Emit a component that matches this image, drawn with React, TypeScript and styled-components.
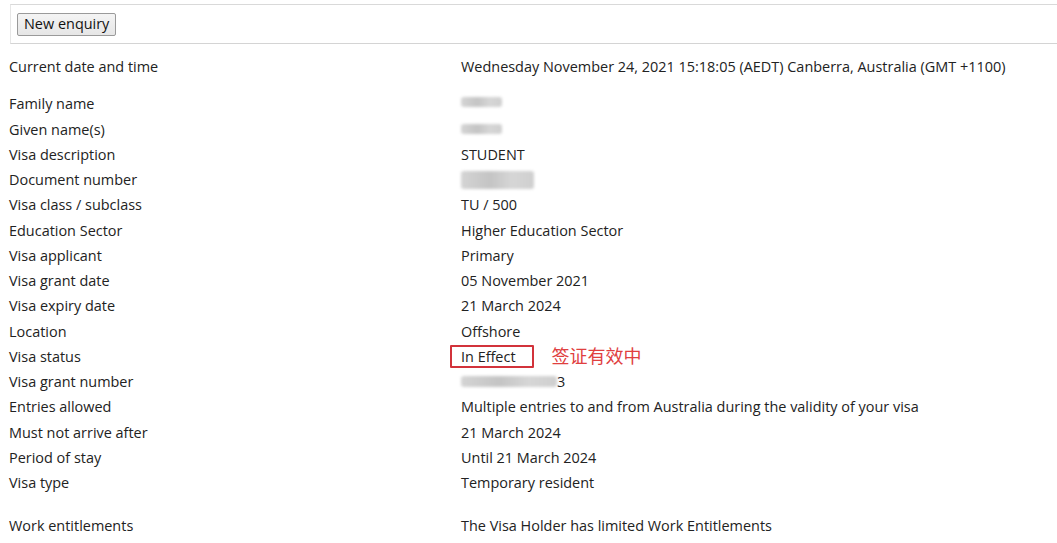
import React from 'react'
import styled, { createGlobalStyle } from 'styled-components'

const GlobalStyle = createGlobalStyle`
  html, body {
    margin: 0;
    padding: 0;
    background: #ffffff;
  }
  body {
    font-family: 'Open Sans', 'Noto Sans', 'Noto Sans CJK SC', sans-serif;
    font-size: 14.45px;
    color: #222222;
  }
`

const Page = styled.div`
  width: 1057px;
  height: 543px;
  overflow: hidden;
  padding-top: 4px;
  box-sizing: border-box;
`

const Toolbar = styled.div`
  margin-left: 10px;
  height: 38px;
  border-top: 1px solid #d9d9d9;
  border-left: 1px solid #e6e6e6;
  border-bottom: 1px solid #d4d4d4;
  display: flex;
  align-items: center;
  padding-left: 6px;
`

const Button = styled.button`
  font-family: inherit;
  font-size: 14.45px;
  color: #111;
  height: 23px;
  padding: 0 6px;
  background: linear-gradient(#f4f4f4, #e6e6e6);
  border: 1px solid #9a9a9a;
  border-radius: 2px;
  line-height: 20px;
`

const Section = styled.div<{ $top: number }>`
  display: grid;
  grid-template-columns: 452px 1fr;
  padding-left: 9px;
  margin-top: ${p => p.$top}px;
  line-height: 25.27px;
`

const Label = styled.div`
  white-space: nowrap;
`

const Value = styled.div`
  white-space: nowrap;
  display: flex;
  align-items: center;
`

const Blur = styled.span<{ $w: number; $h: number; $dy?: number }>`
  display: inline-block;
  width: ${p => p.$w}px;
  height: ${p => p.$h}px;
  margin-top: ${p => (p.$dy ?? 0) * 2}px;
  background: linear-gradient(90deg, #d4d4d4, #c4c4c4 40%, #d6d6d6 70%, #cfcfcf);
  border-radius: 3px;
  filter: blur(1.5px);
`

const StatusBox = styled.span`
  display: inline-block;
  margin-left: -11px;
  padding: 0 16px 0 9px;
  height: 19px;
  line-height: 19px;
  border: 2px solid #d2333b;
  border-radius: 1px;
`

const Note = styled.span`
  margin-left: 18px;
  color: #e0403f;
  font-family: 'Noto Sans CJK SC', sans-serif;
  font-size: 18px;
  line-height: 20px;
  margin-top: -4px;
`

const rows: [string, React.ReactNode][] = [
  ['Family name', <Blur $w={41} $h={10} $dy={-2} />],
  ['Given name(s)', <Blur $w={41} $h={10} />],
  ['Visa description', 'STUDENT'],
  ['Document number', <Blur $w={73} $h={18} />],
  ['Visa class / subclass', 'TU / 500'],
  ['Education Sector', 'Higher Education Sector'],
  ['Visa applicant', 'Primary'],
  ['Visa grant date', '05 November 2021'],
  ['Visa expiry date', '21 March 2024'],
  ['Location', 'Offshore'],
  [
    'Visa status',
    <>
      <StatusBox>In Effect</StatusBox>
      <Note>签证有效中</Note>
    </>,
  ],
  [
    'Visa grant number',
    <>
      <Blur $w={96} $h={11} />
      <span>3</span>
    </>,
  ],
  ['Entries allowed', 'Multiple entries to and from Australia during the validity of your visa'],
  ['Must not arrive after', '21 March 2024'],
  ['Period of stay', 'Until 21 March 2024'],
  ['Visa type', 'Temporary resident'],
]

export default function App() {
  return (
    <>
      <GlobalStyle />
      <Page>
        <Toolbar>
          <Button>New enquiry</Button>
        </Toolbar>
        <Section $top={10}>
          <Label>Current date and time</Label>
          <Value>Wednesday November 24, 2021 15:18:05 (AEDT) Canberra, Australia (GMT +1100)</Value>
        </Section>
        <Section $top={12}>
          {rows.map(([label, value]) => (
            <React.Fragment key={label}>
              <Label>{label}</Label>
              <Value>{value}</Value>
            </React.Fragment>
          ))}
        </Section>
        <Section $top={17}>
          <Label>Work entitlements</Label>
          <Value>The Visa Holder has limited Work Entitlements</Value>
        </Section>
      </Page>
    </>
  )
}
